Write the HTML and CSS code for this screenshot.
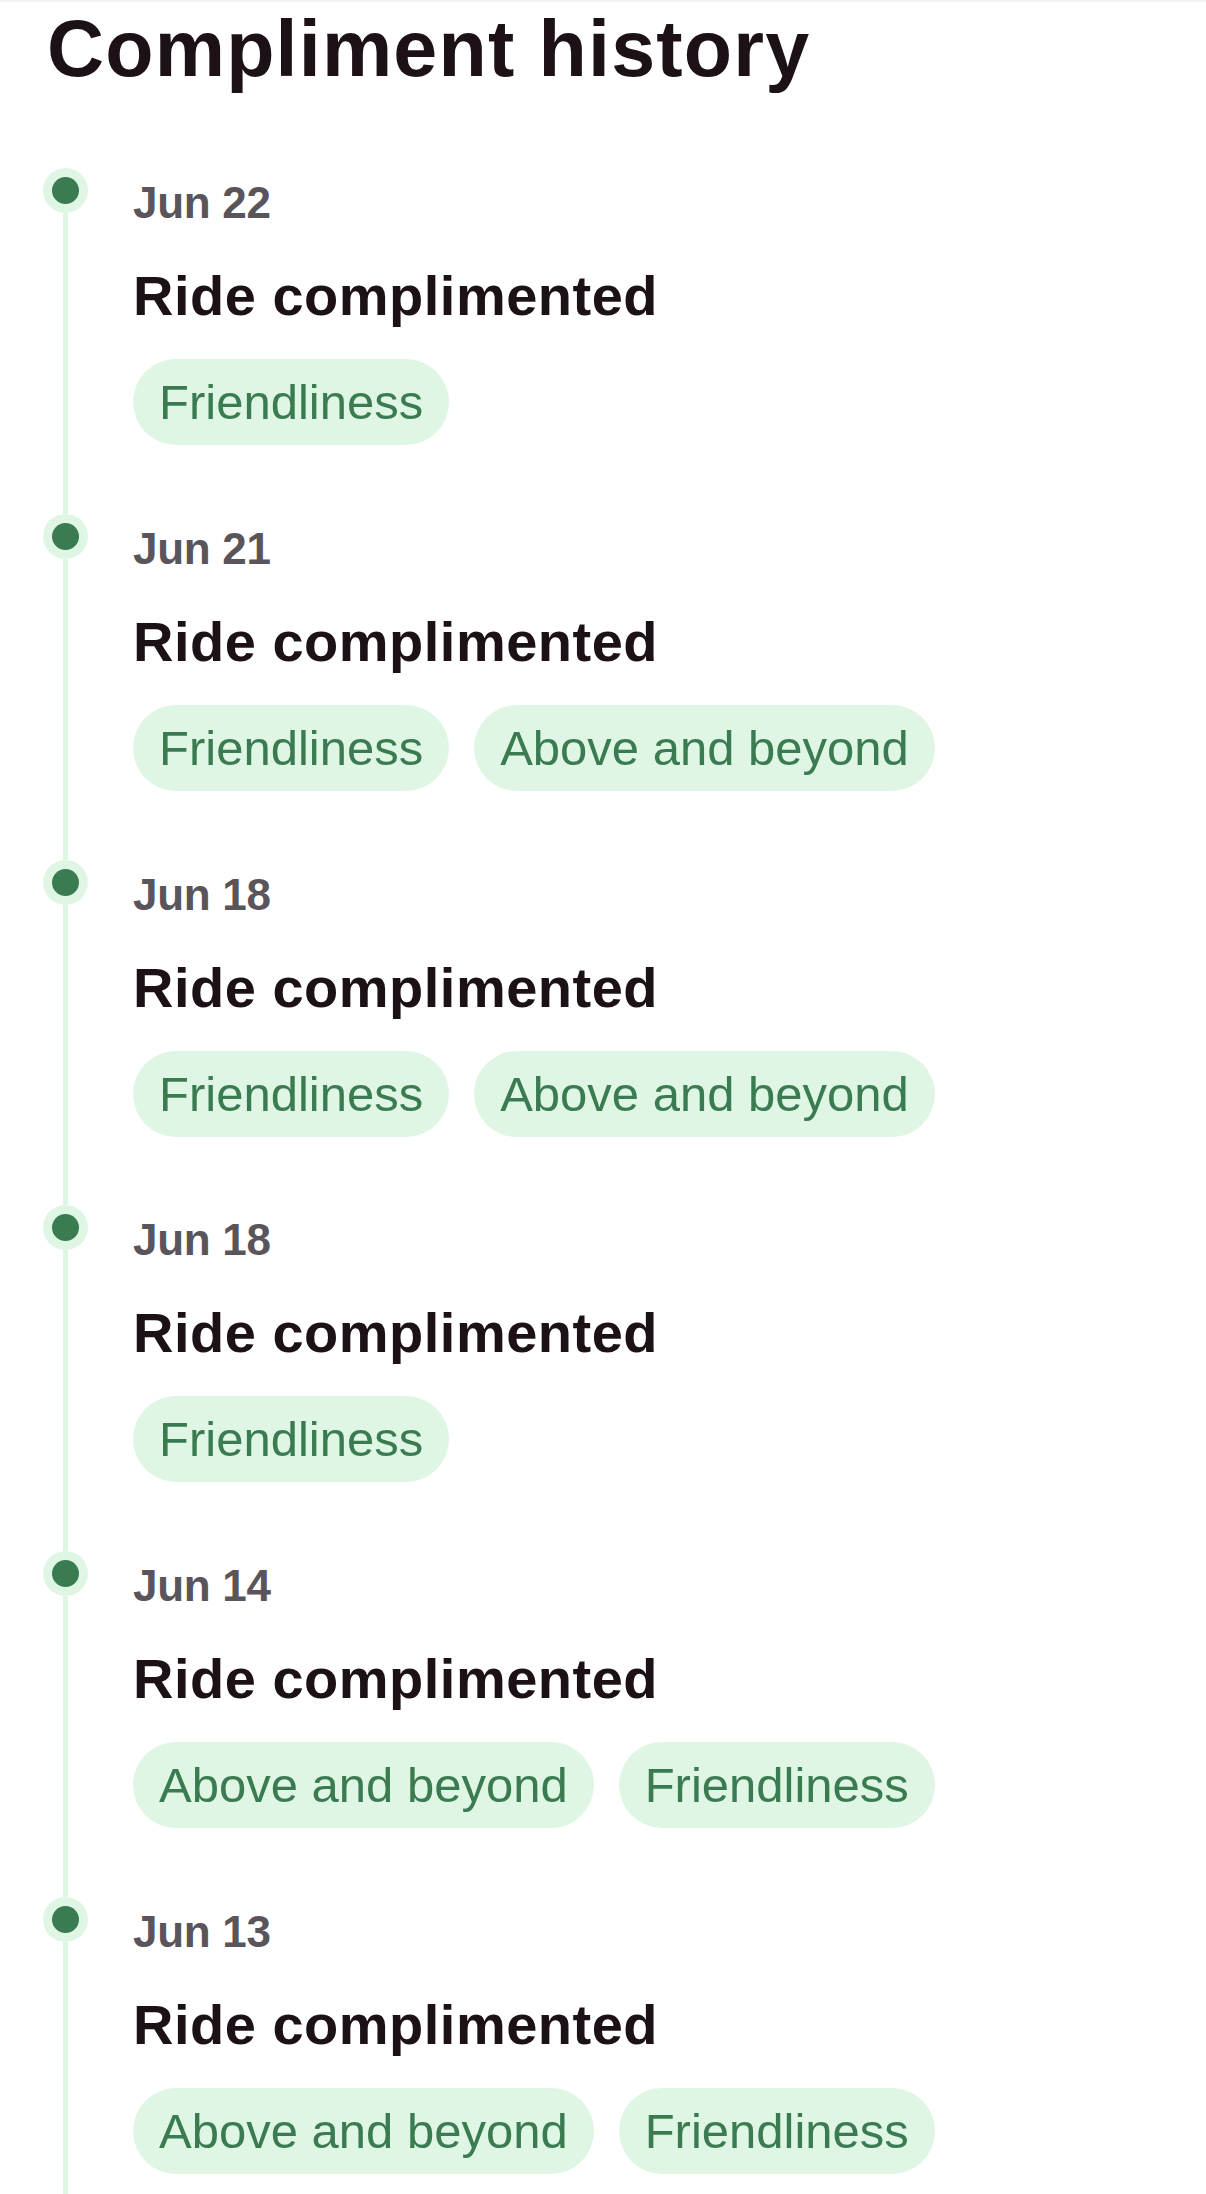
FILE: index.html
```html
<!DOCTYPE html>
<html lang="en">
<head>
<meta charset="utf-8">
<title>Compliment history</title>
<link rel="stylesheet" href="styles.css">
</head>
<body>
<div class="topshade"></div>
<main class="page">
  <h1 class="title">Compliment history</h1>
  <ol class="timeline">
    <li class="item">
      <div class="marker"><span class="dot"></span><span class="seg"></span></div>
      <div class="content">
        <div class="date">Jun 22</div>
        <div class="event">Ride complimented</div>
        <div class="tags"><span class="tag">Friendliness</span></div>
      </div>
    </li>
    <li class="item">
      <div class="marker"><span class="dot"></span><span class="seg"></span></div>
      <div class="content">
        <div class="date">Jun 21</div>
        <div class="event">Ride complimented</div>
        <div class="tags"><span class="tag">Friendliness</span><span class="tag">Above and beyond</span></div>
      </div>
    </li>
    <li class="item">
      <div class="marker"><span class="dot"></span><span class="seg"></span></div>
      <div class="content">
        <div class="date">Jun 18</div>
        <div class="event">Ride complimented</div>
        <div class="tags"><span class="tag">Friendliness</span><span class="tag">Above and beyond</span></div>
      </div>
    </li>
    <li class="item">
      <div class="marker"><span class="dot"></span><span class="seg"></span></div>
      <div class="content">
        <div class="date">Jun 18</div>
        <div class="event">Ride complimented</div>
        <div class="tags"><span class="tag">Friendliness</span></div>
      </div>
    </li>
    <li class="item">
      <div class="marker"><span class="dot"></span><span class="seg"></span></div>
      <div class="content">
        <div class="date">Jun 14</div>
        <div class="event">Ride complimented</div>
        <div class="tags"><span class="tag">Above and beyond</span><span class="tag">Friendliness</span></div>
      </div>
    </li>
    <li class="item">
      <div class="marker"><span class="dot"></span><span class="seg"></span></div>
      <div class="content">
        <div class="date">Jun 13</div>
        <div class="event">Ride complimented</div>
        <div class="tags"><span class="tag">Above and beyond</span><span class="tag">Friendliness</span></div>
      </div>
    </li>
  </ol>
</main>
</body>
</html>
```

FILE: styles.css
```css
html, body {
  margin: 0;
  padding: 0;
  background: #ffffff;
}

body {
  font-family: "Liberation Sans", Arial, sans-serif;
  color: #1b1117;
  height: 2194px;
  overflow: hidden;
}

.topshade {
  height: 3px;
  background: linear-gradient(#ececec, #ffffff);
}

.page {
  padding-left: 43px;
}

.title {
  margin: 0 0 0 4px;
  font-size: 79px;
  line-height: 92px;
  font-weight: 700;
  letter-spacing: 1.2px;
  color: #1b1117;
}

.timeline {
  list-style: none;
  margin: 73px 0 0 0;
  padding: 0;
}

.item {
  display: flex;
  gap: 45px;
}

.marker {
  width: 45px;
  flex: none;
  display: flex;
  flex-direction: column;
  align-items: center;
}

.dot {
  width: 45px;
  height: 45px;
  border-radius: 50%;
  background: #dff6e4;
  display: flex;
  align-items: center;
  justify-content: center;
  flex: none;
}

.dot::after {
  content: "";
  width: 27px;
  height: 27px;
  border-radius: 50%;
  background: #3b7b51;
}

.seg {
  width: 5px;
  flex: 1;
  background: #dff6e4;
}

.content {
  padding: 9px 0 68.8px 0;
  display: flex;
  flex-direction: column;
}

.date {
  font-size: 44px;
  line-height: 52px;
  font-weight: 700;
  color: #5a545b;
  letter-spacing: -0.3px;
}

.event {
  margin-top: 34px;
  font-size: 56px;
  line-height: 66px;
  font-weight: 700;
  letter-spacing: 0.5px;
  color: #1b1117;
}

.tags {
  margin-top: 30px;
  display: flex;
  gap: 25px;
}

.tag {
  display: inline-block;
  background: #dff6e4;
  color: #3b7b51;
  font-size: 49px;
  line-height: 58px;
  padding: 14px 26px;
  border-radius: 43px;
  white-space: nowrap;
}
```
